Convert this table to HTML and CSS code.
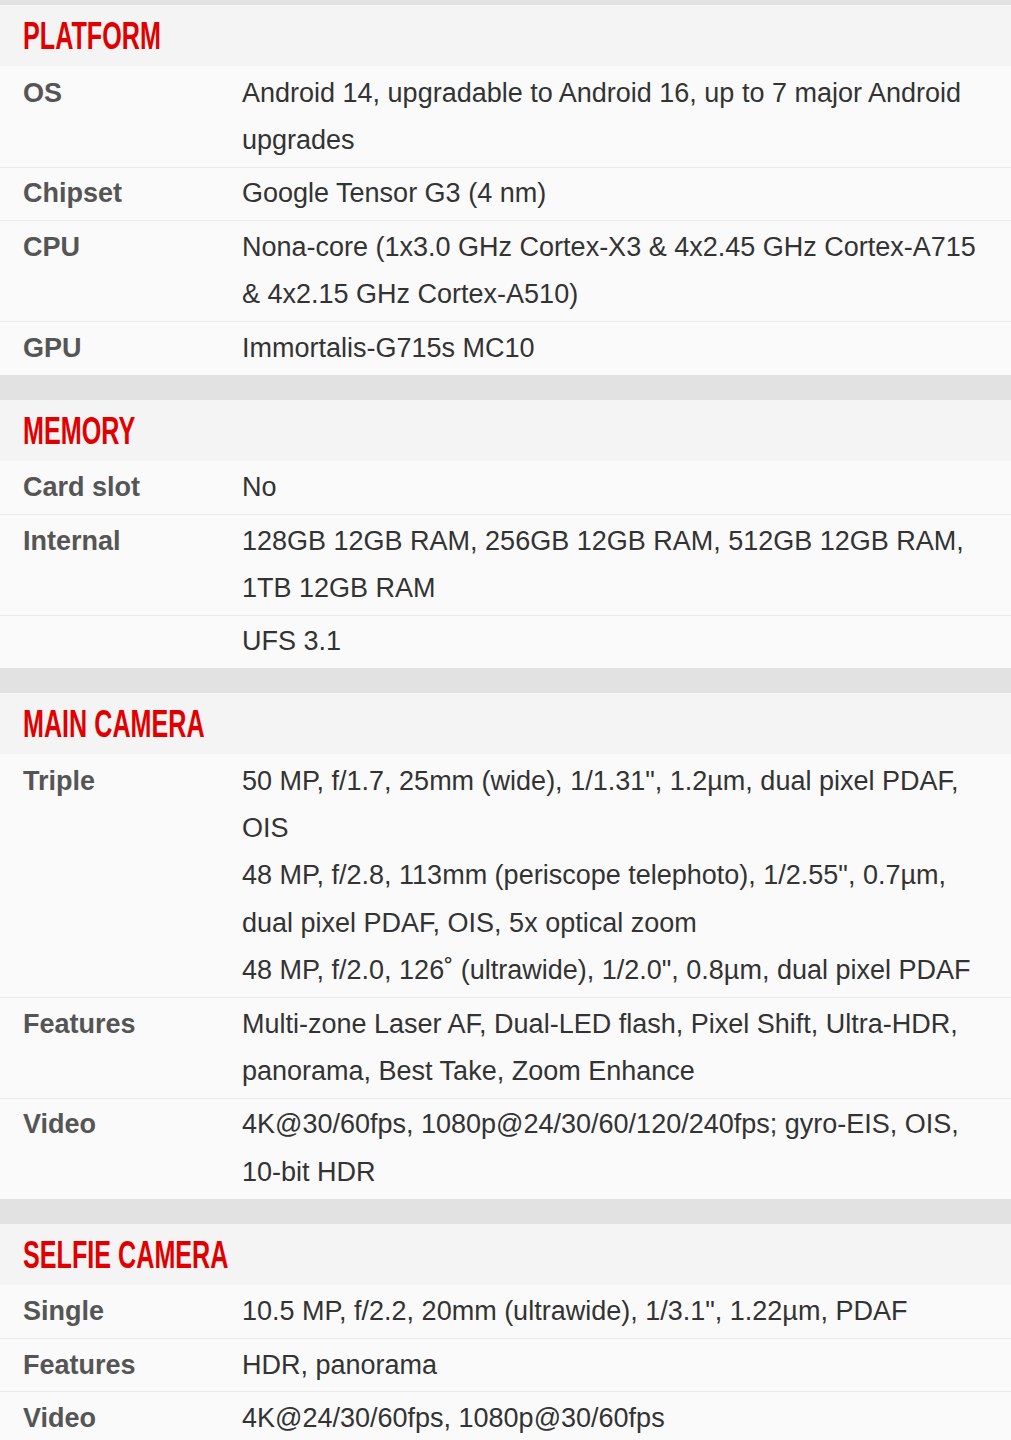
FILE: index.html
```html
<!DOCTYPE html>
<html lang="en">
<head>
<meta charset="utf-8">
<title>Specs</title>
<link rel="stylesheet" href="styles.css">
</head>
<body>
<div class="specs">
  <div class="gap gap-top"></div>

  <section class="section">
    <div class="head"><span class="title">PLATFORM</span></div>
    <div class="row"><div class="label">OS</div><div class="value"><div>Android 14, upgradable to Android 16, up to 7 major Android upgrades</div></div></div>
    <div class="row"><div class="label">Chipset</div><div class="value"><div>Google Tensor G3 (4 nm)</div></div></div>
    <div class="row"><div class="label">CPU</div><div class="value"><div>Nona-core (1x3.0 GHz Cortex-X3 &amp; 4x2.45 GHz Cortex-A715 &amp; 4x2.15 GHz Cortex-A510)</div></div></div>
    <div class="row"><div class="label">GPU</div><div class="value"><div>Immortalis-G715s MC10</div></div></div>
  </section>

  <div class="gap"></div>

  <section class="section">
    <div class="head"><span class="title">MEMORY</span></div>
    <div class="row"><div class="label">Card slot</div><div class="value"><div>No</div></div></div>
    <div class="row"><div class="label">Internal</div><div class="value"><div>128GB 12GB RAM, 256GB 12GB RAM, 512GB 12GB RAM, 1TB 12GB RAM</div></div></div>
    <div class="row"><div class="label"></div><div class="value"><div>UFS 3.1</div></div></div>
  </section>

  <div class="gap"></div>

  <section class="section">
    <div class="head"><span class="title">MAIN CAMERA</span></div>
    <div class="row"><div class="label">Triple</div><div class="value">
      <div>50 MP, f/1.7, 25mm (wide), 1/1.31", 1.2µm, dual pixel PDAF, OIS</div>
      <div>48 MP, f/2.8, 113mm (periscope telephoto), 1/2.55", 0.7µm, dual pixel PDAF, OIS, 5x optical zoom</div>
      <div>48 MP, f/2.0, 126˚ (ultrawide), 1/2.0", 0.8µm, dual pixel PDAF</div>
    </div></div>
    <div class="row"><div class="label">Features</div><div class="value"><div>Multi-zone Laser AF, Dual-LED flash, Pixel Shift, Ultra-HDR, panorama, Best Take, Zoom Enhance</div></div></div>
    <div class="row"><div class="label">Video</div><div class="value"><div>4K@30/60fps, 1080p@24/30/60/120/240fps; gyro-EIS, OIS, 10-bit HDR</div></div></div>
  </section>

  <div class="gap"></div>

  <section class="section">
    <div class="head"><span class="title">SELFIE CAMERA</span></div>
    <div class="row"><div class="label">Single</div><div class="value"><div>10.5 MP, f/2.2, 20mm (ultrawide), 1/3.1", 1.22µm, PDAF</div></div></div>
    <div class="row"><div class="label">Features</div><div class="value"><div>HDR, panorama</div></div></div>
    <div class="row"><div class="label">Video</div><div class="value"><div>4K@24/30/60fps, 1080p@30/60fps</div></div></div>
  </section>
</div>
</body>
</html>
```

FILE: styles.css
```css
html, body {
  margin: 0;
  padding: 0;
  background: #fafafa;
}

.specs {
  width: 1011px;
  font-family: "Liberation Sans", Arial, sans-serif;
  font-size: 27px;
  line-height: 47.3px;
}

.gap {
  height: 25px;
  background: #e2e2e2;
}

.gap-top {
  height: 5px;
}

.head {
  height: 61px;
  background: #f4f4f4;
  padding-left: 23px;
  display: flex;
  align-items: center;
  overflow: hidden;
}

.title {
  display: inline-block;
  font-family: "Liberation Sans", Arial, sans-serif;
  font-weight: 700;
  font-size: 39px;
  line-height: 1;
  color: #e00000;
  transform: scaleX(0.645);
  transform-origin: left center;
  white-space: nowrap;
}

.row {
  display: flex;
  background: #fafafa;
  padding: 2.6px 0;
  border-top: 1px solid transparent;
}

.row + .row {
  border-top-color: #ebebeb;
}

.label {
  width: 242px;
  flex: none;
  box-sizing: border-box;
  padding-left: 23px;
  font-weight: 700;
  color: #555555;
}

.value {
  flex: 1;
  padding-right: 16px;
  color: #333333;
}
```
